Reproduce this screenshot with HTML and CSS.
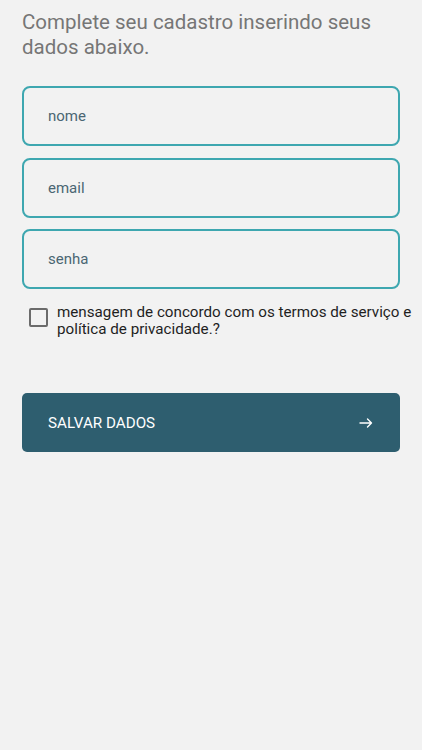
FILE: index.html
```html
<!DOCTYPE html>
<html lang="pt">
<head>
<meta charset="utf-8">
<title>Cadastro</title>
<link rel="stylesheet" href="styles.css">
</head>
<body>
<main class="page">
  <h1 class="title">Complete seu cadastro inserindo seus dados abaixo.</h1>
  <div class="fields">
    <div class="field">nome</div>
    <div class="field">email</div>
    <div class="field">senha</div>
  </div>
  <label class="terms">
    <span class="box"></span>
    <span class="terms-text">mensagem de concordo com os termos de serviço e política de privacidade.?</span>
  </label>
  <button class="save" type="button">
    <span>SALVAR DADOS</span>
    <svg class="arrow" width="14" height="12" viewBox="0 0 14 12" fill="none" stroke="#ffffff" stroke-width="1.4" stroke-linecap="round" stroke-linejoin="round"><path d="M1 6h11.5M8.5 2L12.5 6 8.5 10"/></svg>
  </button>
</main>
</body>
</html>
```

FILE: styles.css
```css
html, body {
  margin: 0;
  padding: 0;
  background: #f2f2f2;
}
body {
  font-family: Roboto, "Noto Sans", Arial, sans-serif;
  width: 422px;
  height: 750px;
  overflow: hidden;
}
.page {
  padding: 10px 22px 0 22px;
  display: flex;
  flex-direction: column;
}
.title {
  margin: 0;
  font-size: 20.5px;
  font-weight: 400;
  line-height: 25px;
  color: #767676;
  width: 370px;
}
.fields {
  margin-top: 26px;
  display: flex;
  flex-direction: column;
  gap: 11.5px;
}
.field {
  height: 56px;
  border: 2px solid #3ea7b0;
  border-radius: 8px;
  padding-left: 24px;
  display: flex;
  align-items: center;
  font-size: 15px;
  color: #4a6673;
}
.terms {
  display: flex;
  align-items: flex-start;
  margin: 15px -14px 0 7px;
  gap: 9px;
}
.box {
  flex: 0 0 auto;
  width: 15px;
  height: 15px;
  border: 2px solid #6b6b6b;
  border-radius: 2px;
  margin-top: 4px;
}
.terms-text {
  font-size: 15.2px;
  line-height: 17px;
  color: #1f1f1f;
}
.save {
  margin-top: 55px;
  height: 59px;
  border: none;
  border-radius: 5px;
  background: #2e5e6f;
  color: #ffffff;
  font-family: inherit;
  font-size: 15.2px;
  font-weight: 400;
  display: flex;
  align-items: center;
  justify-content: space-between;
  padding: 0 27px 0 26px;
}
.arrow {
  display: block;
}
```
